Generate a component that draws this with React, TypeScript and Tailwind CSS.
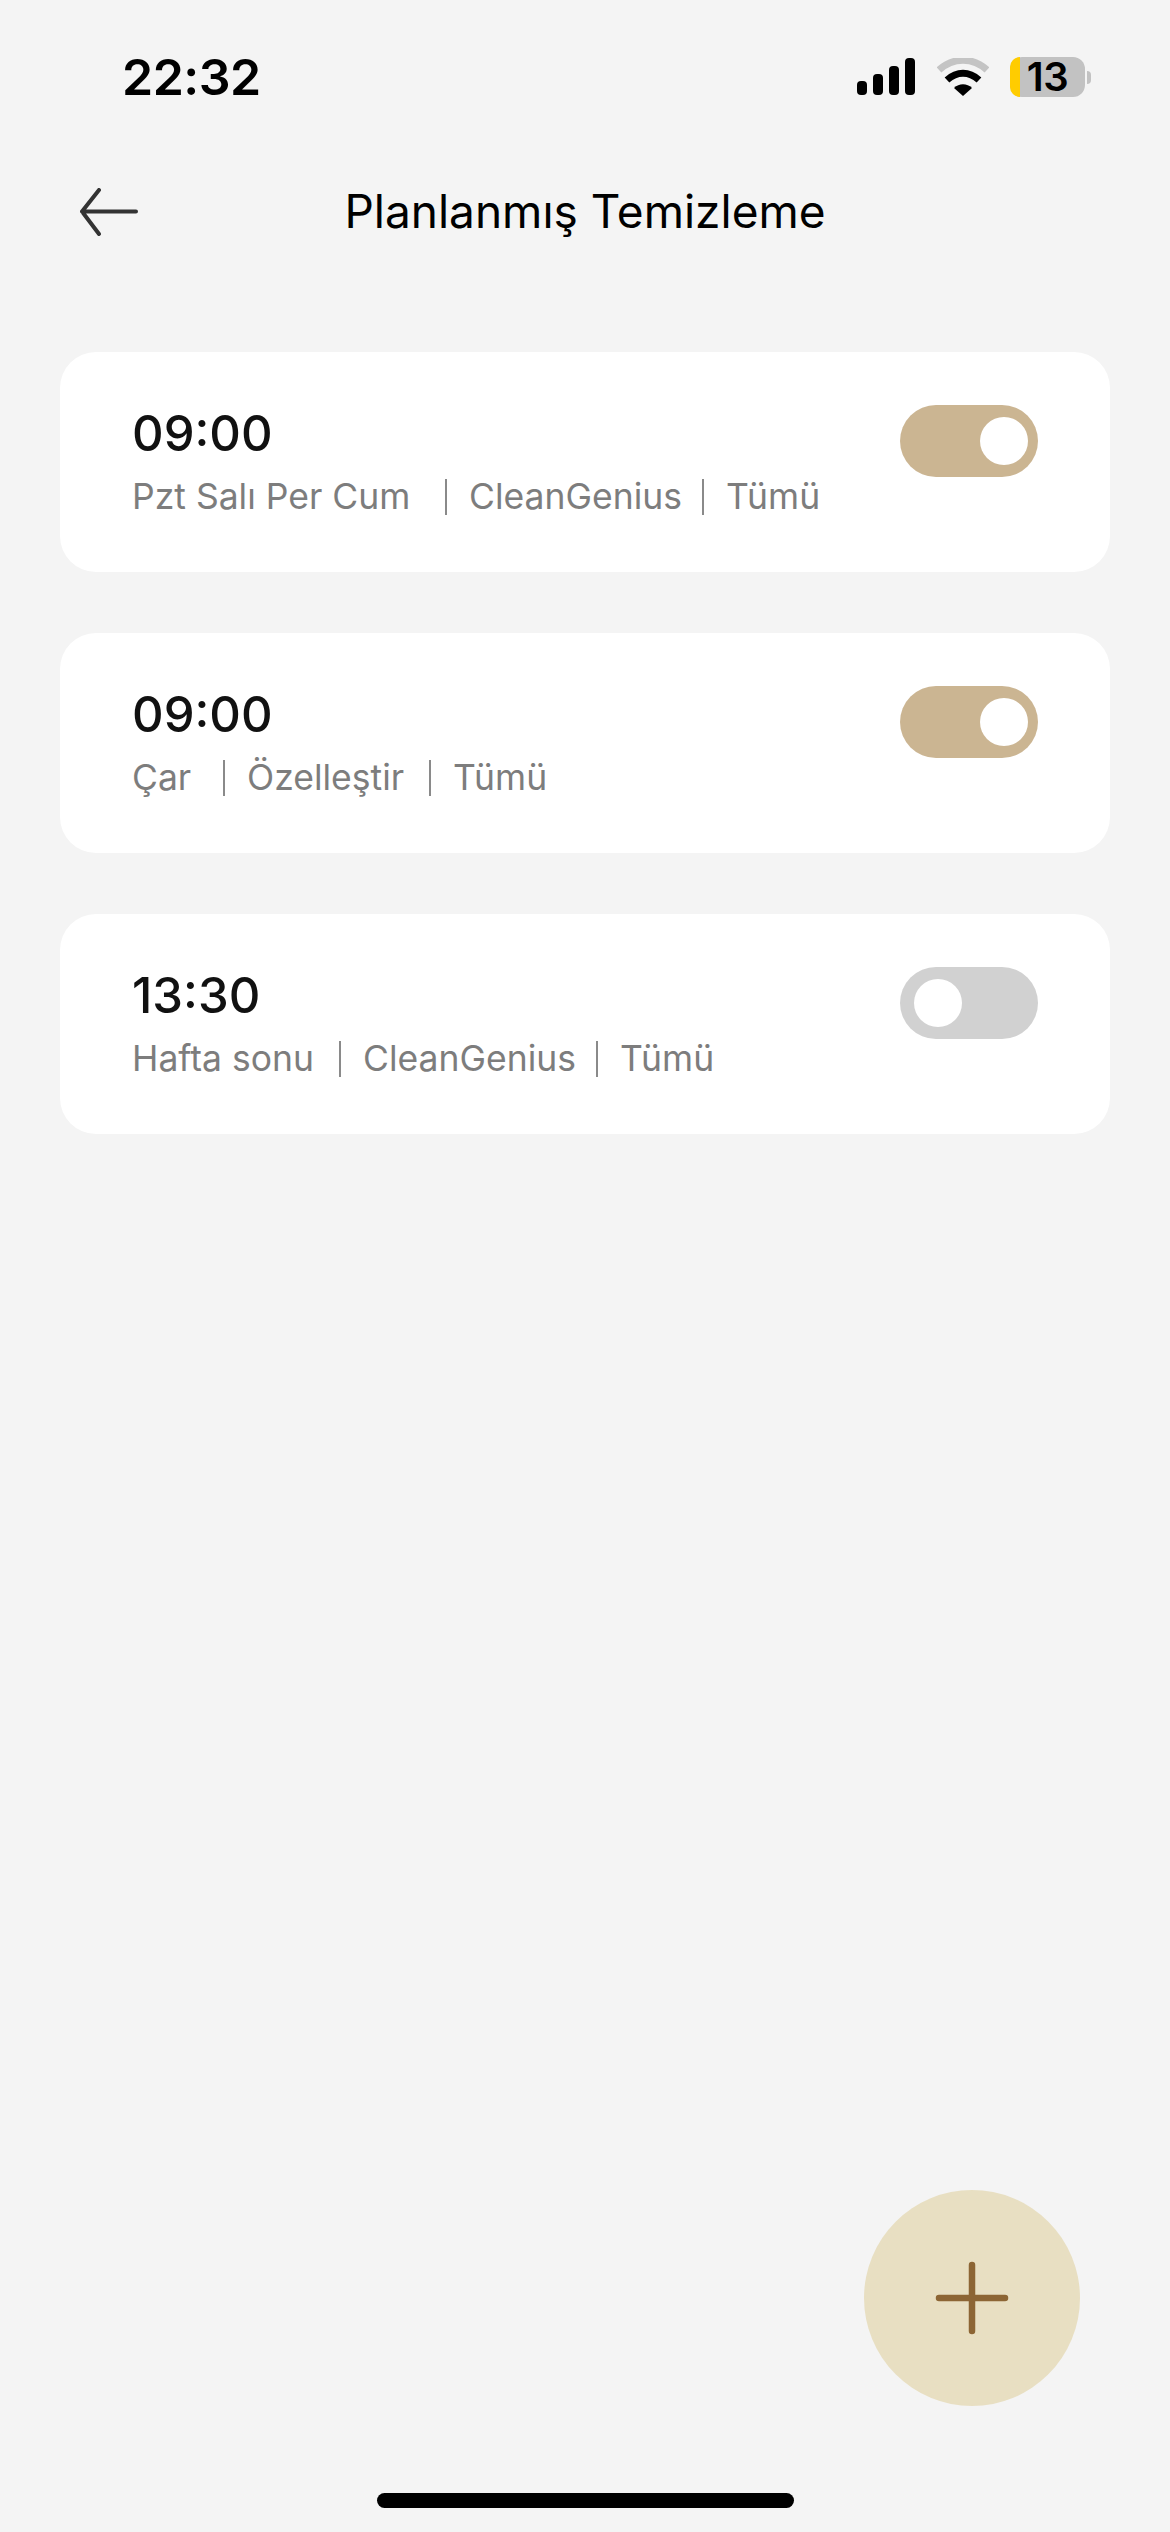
import React from 'react';

interface Schedule {
  time: string;
  parts: { label: string; width: string }[];
  on: boolean;
}

const schedules: Schedule[] = [
  {
    time: '09:00',
    parts: [
      { label: 'Pzt Salı Per Cum', width: 'w-[313px]' },
      { label: 'CleanGenius', width: 'w-[233px]' },
      { label: 'Tümü', width: '' },
    ],
    on: true,
  },
  {
    time: '09:00',
    parts: [
      { label: 'Çar', width: 'w-[91px]' },
      { label: 'Özelleştir', width: 'w-[182px]' },
      { label: 'Tümü', width: '' },
    ],
    on: true,
  },
  {
    time: '13:30',
    parts: [
      { label: 'Hafta sonu', width: 'w-[207px]' },
      { label: 'CleanGenius', width: 'w-[233px]' },
      { label: 'Tümü', width: '' },
    ],
    on: false,
  },
];

const StatusIcons = () => (
  <div className="flex items-center">
    <svg width="60" height="38" viewBox="0 0 60 38" className="mr-[21px]">
      <rect x="1" y="23" width="10" height="14" rx="4" fill="#000" />
      <rect x="17" y="16" width="10" height="21" rx="4" fill="#000" />
      <rect x="33" y="8" width="10" height="29" rx="4" fill="#000" />
      <rect x="49" y="0" width="10" height="37" rx="4" fill="#000" />
    </svg>
    <svg width="52" height="38" viewBox="0 0 52 38" className="mr-[21px]">
      <path d="M2 12 C16 -1 36 -1 50 12" fill="none" stroke="#c4c4c4" strokeWidth="7" />
      <path d="M10 22 C20 13 32 13 42 22" fill="none" stroke="#000" strokeWidth="7" />
      <path d="M17 30 C22 25 30 25 35 30 L26 38 Z" fill="#000" />
    </svg>
    <div className="flex items-center">
      <div className="w-[75px] h-[40px] rounded-[12px] bg-[#c2c2c2] flex">
        <div className="w-[10px] h-full rounded-l-[12px] bg-[#ffcc00]" />
        <div className="flex-1 pr-[10px] text-center text-[40px] leading-[40px] font-semibold tracking-[-0.5px] text-black">13</div>
      </div>
      <div className="ml-[2px] w-[4px] h-[13px] rounded-r-full bg-[#c2c2c2]" />
    </div>
  </div>
);

const Toggle = ({ on }: { on: boolean }) => (
  <div className={`mt-[1px] w-[138px] h-[72px] rounded-full flex items-center ${on ? 'bg-[#cbb592] justify-end pr-[10px]' : 'bg-[#d1d1d1] justify-start pl-[14px]'}`}>
    <div className="w-[48px] h-[48px] rounded-full bg-white" />
  </div>
);

const ScheduleCard = ({ item }: { item: Schedule }) => (
  <div className="h-[220px] rounded-[36px] bg-white pl-[72px] pr-[72px] pt-[52px] flex justify-between items-start">
    <div>
      <div className="text-[49px] leading-[60px] font-medium text-[#111]">{item.time}</div>
      <div className="mt-[11px] flex items-center text-[35.5px] leading-[44px] text-[#7d7d7d]">
        {item.parts.map((part, i) => (
          <React.Fragment key={i}>
            <span className={`whitespace-nowrap ${part.width}`}>{part.label}</span>
            {i < item.parts.length - 1 && <span className="w-[2px] h-[36px] bg-[#8a8a8a] mr-[22px]" />}
          </React.Fragment>
        ))}
      </div>
    </div>
    <Toggle on={item.on} />
  </div>
);

const App: React.FC = () => {
  return (
    <div className="w-[1170px] h-[2532px] bg-[#f4f4f4] flex flex-col overflow-hidden font-['Inter',sans-serif]">
      <div className="h-[156px] pl-[122px] pr-[79px] pt-[47px] flex justify-between items-start">
        <div className="text-[50px] leading-[60px] font-semibold text-black tracking-[-0.5px]">22:32</div>
        <div className="mt-[10px]">
          <StatusIcons />
        </div>
      </div>

      <div className="h-[110px] relative flex items-center justify-center">
        <svg width="60" height="50" viewBox="0 0 60 50" className="absolute left-[78px] top-[32px]">
          <path d="M58 23.5 H4 M21 2 L4 23.5 L21 46" fill="none" stroke="#333" strokeWidth="4" strokeLinecap="round" strokeLinejoin="round" />
        </svg>
        <div className="text-[46px] leading-[60px] text-black">Planlanmış Temizleme</div>
      </div>

      <div className="mt-[86px] px-[60px] flex flex-col gap-[61px]">
        {schedules.map((s, i) => (
          <ScheduleCard key={i} item={s} />
        ))}
      </div>

      <div className="flex-1" />

      <div className="flex justify-end pr-[90px]">
        <div className="w-[216px] h-[216px] rounded-full bg-[#e8dfc2] flex items-center justify-center">
          <svg width="76" height="76" viewBox="0 0 76 76">
            <path d="M38 5 V71 M5 38 H71" fill="none" stroke="#8c6534" strokeWidth="6.5" strokeLinecap="round" />
          </svg>
        </div>
      </div>

      <div className="mt-[87px] mb-[24px] flex justify-center">
        <div className="w-[417px] h-[15px] rounded-full bg-black" />
      </div>
    </div>
  );
};

export default App;
